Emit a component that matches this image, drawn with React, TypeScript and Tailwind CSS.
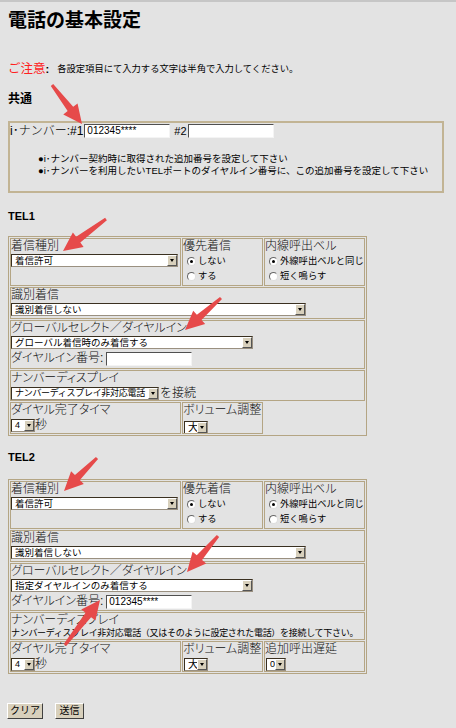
import React from "react";

// red annotation arrows drawn over the form (tail -> tip)
const arrows: [number, number, number, number][] = [
  [52, 83, 82, 122],
  [106, 217, 63, 249],
  [221, 296, 185, 328],
  [97, 456, 64, 489],
  [218, 534, 187, 570],
  [65, 643, 100, 598],
];

function arrowPoints(x1: number, y1: number, x2: number, y2: number) {
  const dx = x2 - x1;
  const dy = y2 - y1;
  const len = Math.hypot(dx, dy);
  const ux = dx / len;
  const uy = dy / len;
  const nx = -uy;
  const ny = ux;
  const hl = 19;
  const bx = x2 - ux * hl;
  const by = y2 - uy * hl;
  const p = (x: number, y: number, k: number) => `${x + nx * k},${y + ny * k}`;
  return [p(x1, y1, 1.5), p(bx, by, 3.5), p(bx, by, 9), `${x2},${y2}`, p(bx, by, -9), p(bx, by, -3.5), p(x1, y1, -1.5)].join(" ");
}

function Select({ w, text, t = "text-[9.5px]" }: { w: string; text: string; t?: string }) {
  return (
    <div className={`${w} flex h-[13px] border border-[#3a3020] border-b-[#9a9080] border-r-[#9a9080] bg-white`}>
      <span className={`flex-1 overflow-hidden whitespace-nowrap pl-[3px] font-normal leading-[11px] ${t}`}>{text}</span>
      <span className="flex w-[10px] items-center justify-center border border-t-white border-l-white border-b-[#555] border-r-[#555] bg-[#d8d0bc]">
        <span className="h-0 w-0 border-x-[2.5px] border-t-[3px] border-x-transparent border-t-black" />
      </span>
    </div>
  );
}

function TextBox({ w, value = "" }: { w: string; value?: string }) {
  return (
    <div className={`${w} h-[14px] border border-t-[#505050] border-l-[#505050] border-b-[#f4f4f4] border-r-[#f4f4f4] bg-white pl-[2px] text-[10px] font-normal leading-[12px]`}>
      {value}
    </div>
  );
}

function Radio({ on, label }: { on?: boolean; label: string }) {
  return (
    <div className="flex h-[15px] items-center">
      <span className="flex h-[9px] w-[9px] items-center justify-center rounded-full border border-t-[#666] border-l-[#666] border-b-[#ddd] border-r-[#ddd] bg-white">
        {on && <span className="h-[3px] w-[3px] rounded-full bg-black" />}
      </span>
      <span className="ml-[2px] whitespace-nowrap text-[9.3px] font-normal">{label}</span>
    </div>
  );
}

function Label({ children }: { children: React.ReactNode }) {
  return (
    <div className="whitespace-nowrap text-[12px] leading-[15px] text-[#111] [font-feature-settings:'palt']">
      {children}
    </div>
  );
}

const cell = "border border-[#b4a584] overflow-hidden";

function TelTable({ tel2 }: { tel2?: boolean }) {
  return (
    <div className="ml-[8px] w-[359px] border border-[#b4a584] p-px">
      <div className="grid grid-cols-[171px_81px_101px] gap-px">
        {/* row 1 */}
        <div className={`${cell} h-[48px]`}>
          <Label>着信種別</Label>
          <Select w="w-[167px]" text="着信許可" />
        </div>
        <div className={`${cell} h-[48px]`}>
          <Label>優先着信</Label>
          <div className="pl-[4px]">
            <Radio on label="しない" />
            <Radio label="する" />
          </div>
        </div>
        <div className={`${cell} h-[48px]`}>
          <Label>内線呼出ベル</Label>
          <div className="pl-[4px]">
            <Radio on label="外線呼出ベルと同じ" />
            <Radio label="短く鳴らす" />
          </div>
        </div>

        {/* row 2 */}
        <div className={`${cell} col-span-3 h-[32px]`}>
          <Label>識別着信</Label>
          <Select w="w-[295px]" text="識別着信しない" />
        </div>

        {/* row 3 */}
        <div className={`${cell} col-span-3 ${tel2 ? "h-[48px]" : "h-[49px]"}`}>
          <Label>グローバルセレクト／ダイヤルイン</Label>
          <Select w="w-[242px]" text={tel2 ? "指定ダイヤルインのみ着信する" : "グローバル着信時のみ着信する"} />
          <div className="mt-[2px] flex items-center">
            <Label>ダイヤルイン番号:</Label>
            <div className="ml-[3px]">
              <TextBox w="w-[86px]" value={tel2 ? "012345****" : ""} />
            </div>
          </div>
        </div>

        {/* row 4 */}
        {tel2 ? (
          <div className={`${cell} col-span-3 h-[28px]`}>
            <Label>ナンバーディスプレイ</Label>
            <div className="whitespace-nowrap text-[9px] font-normal leading-[10px] tracking-[-0.3px]">
              ナンバーディスプレイ非対応電話（又はそのように設定された電話）を接続して下さい。
            </div>
          </div>
        ) : (
          <div className={`${cell} col-span-3 h-[31px]`}>
            <Label>ナンバーディスプレイ</Label>
            <div className="flex items-center">
              <Select w="w-[148px]" text="ナンバーディスプレイ非対応電話" t="text-[9px] tracking-[-0.3px]" />
              <span className="ml-px text-[12px] leading-[14px]">を接続</span>
            </div>
          </div>
        )}

        {/* row 5 */}
        <div className={`${cell} ${tel2 ? "h-[31px]" : "h-[32px]"}`}>
          <Label>ダイヤル完了タイマ</Label>
          <div className="flex items-center">
            <Select w="w-[24px]" text="4" t="text-[9px]" />
            <span className="text-[12px] leading-[14px]">秒</span>
          </div>
        </div>
        <div className={`${cell} ${tel2 ? "h-[31px]" : "h-[32px]"}`}>
          <Label>ボリューム調整</Label>
          <div className={`ml-px ${tel2 ? "mt-px" : "mt-[3px]"}`}>
            <Select w="w-[24px]" text="大" t="text-[10.5px]" />
          </div>
        </div>
        {tel2 ? (
          <div className={`${cell} h-[31px]`}>
            <Label>追加呼出遅延</Label>
            <div className="ml-px mt-px">
              <Select w="w-[20px]" text="0" t="text-[9px]" />
            </div>
          </div>
        ) : (
          <div />
        )}
      </div>
    </div>
  );
}

export default function App() {
  return (
    <div className="relative h-[728px] w-[456px] overflow-hidden border-t-2 border-[#c6c6c6] bg-[#e3e3e3] font-['Liberation_Sans','Noto_Sans_CJK_JP',sans-serif] font-light text-black">
      <h1 className="ml-[8px] mt-[9px] text-[19px] font-bold leading-[20px]">電話の基本設定</h1>

      <p className="ml-[8px] mt-[31px] flex items-center leading-[14px]">
        <span className="text-[12.5px] font-normal text-[#ff2020]">ご注意</span>
        <span className="text-[11px] font-bold">:</span>
        <span className="ml-[8px] text-[9.3px] font-normal">各設定項目にて入力する文字は半角で入力してください。</span>
      </p>

      <h2 className="ml-[8px] mt-[16px] text-[12px] font-bold leading-[14px]">共通</h2>

      {/* common box */}
      <div className="ml-[8px] mt-[15px] h-[72px] w-[436px] border-2 border-[#c2b494] pt-px">
        <div className="flex items-center">
          <span className="whitespace-nowrap text-[12px] leading-[14px]">i･ナンバー:#1</span>
          <div className="ml-px">
            <TextBox w="w-[86px]" value="012345****" />
          </div>
          <span className="ml-[4px] text-[11px] leading-[14px]">#2</span>
          <div className="ml-px">
            <TextBox w="w-[86px]" />
          </div>
        </div>
        <div className="ml-[28px] mt-[15px] whitespace-nowrap text-[9.5px] font-normal leading-[12px]">
          <div>●i･ナンバー契約時に取得された追加番号を設定して下さい</div>
          <div>●i･ナンバーを利用したいTELポートのダイヤルイン番号に、この追加番号を設定して下さい</div>
        </div>
      </div>

      <h2 className="ml-[8px] mt-[16px] text-[11px] font-bold leading-[14px]">TEL1</h2>
      <div className="mt-[13px]">
        <TelTable />
      </div>

      <h2 className="ml-[8px] mt-[14px] text-[11px] font-bold leading-[14px]">TEL2</h2>
      <div className="mt-[15px]">
        <TelTable tel2 />
      </div>

      <div className="ml-[7px] mt-[29px] flex gap-[12px]">
        <button className="h-[16px] w-[36px] border border-t-white border-l-white border-b-[#404040] border-r-[#404040] bg-[#d8d0bc] text-[10px] font-normal leading-[14px]">
          クリア
        </button>
        <button className="h-[16px] w-[29px] border border-t-white border-l-white border-b-[#404040] border-r-[#404040] bg-[#d8d0bc] text-[10px] font-normal leading-[14px]">
          送信
        </button>
      </div>

      <svg className="pointer-events-none absolute left-0 top-0" width="456" height="728">
        {arrows.map(([x1, y1, x2, y2], i) => (
          <polygon key={i} points={arrowPoints(x1, y1, x2, y2)} fill="#e64a4a" />
        ))}
      </svg>
    </div>
  );
}
